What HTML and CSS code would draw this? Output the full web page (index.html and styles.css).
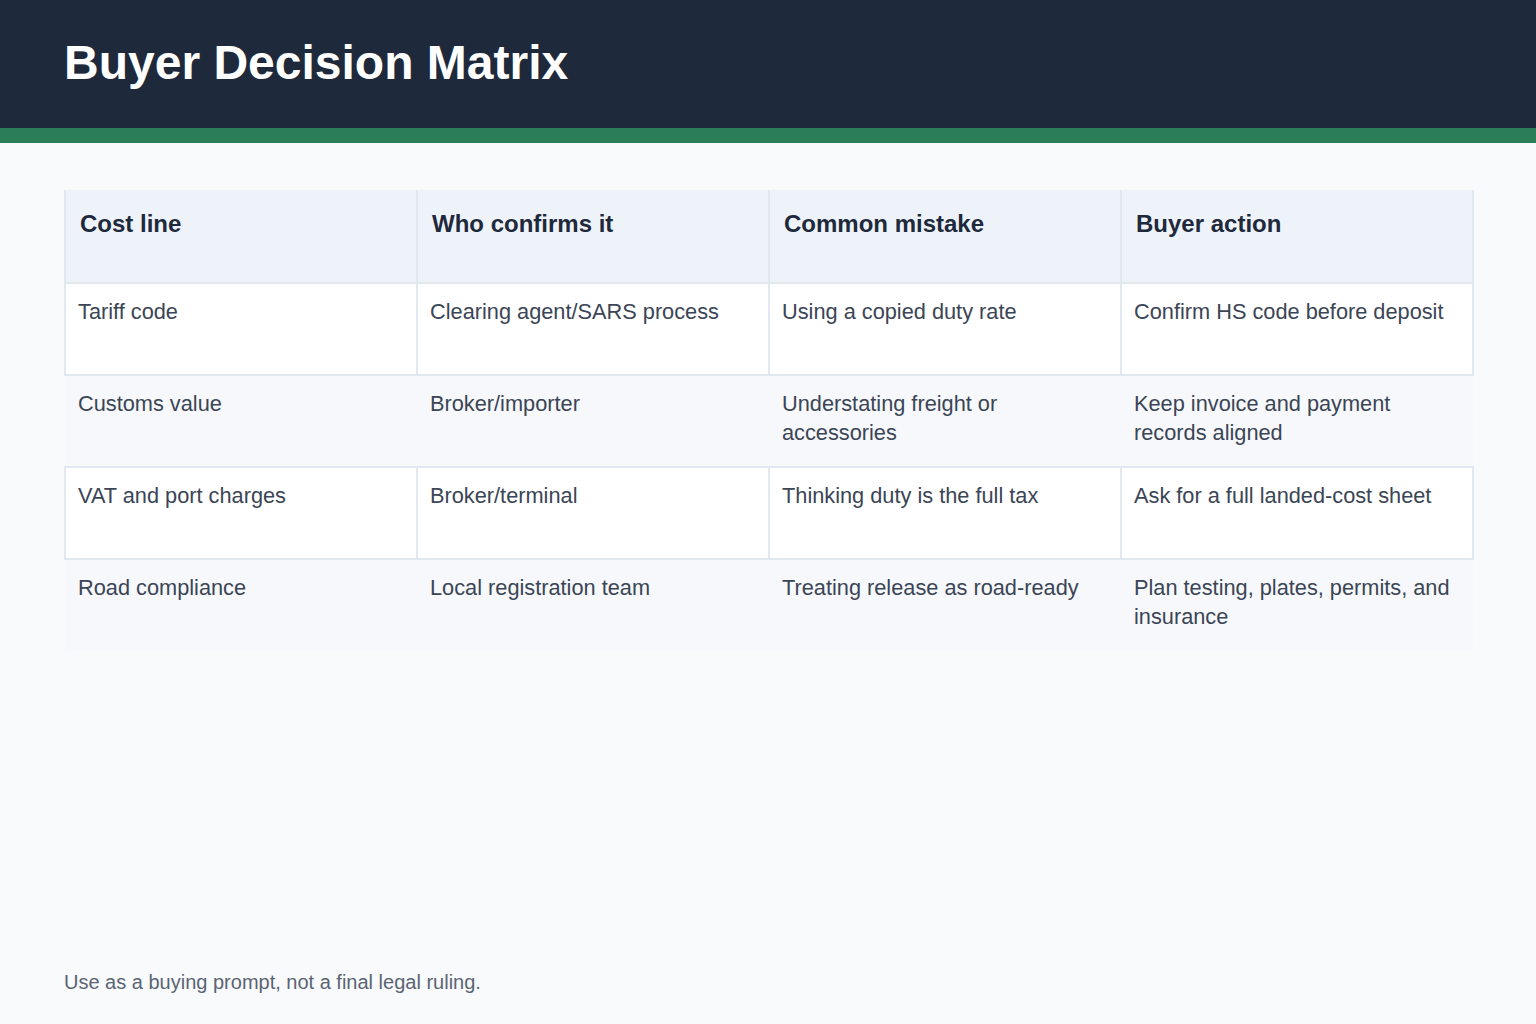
FILE: index.html
```html
<!DOCTYPE html>
<html lang="en">
<head>
<meta charset="utf-8">
<title>Buyer Decision Matrix</title>
<link rel="stylesheet" href="styles.css">
</head>
<body>
<div class="page">
  <header class="topbar">
    <h1 class="title">Buyer Decision Matrix</h1>
  </header>
  <main class="content">
    <table class="matrix">
      <thead>
        <tr>
          <th>Cost line</th>
          <th>Who confirms it</th>
          <th>Common mistake</th>
          <th>Buyer action</th>
        </tr>
      </thead>
      <tbody>
        <tr class="odd">
          <td>Tariff code</td>
          <td>Clearing agent/SARS process</td>
          <td>Using a copied duty rate</td>
          <td>Confirm HS code before deposit</td>
        </tr>
        <tr class="even">
          <td>Customs value</td>
          <td>Broker/importer</td>
          <td>Understating freight or accessories</td>
          <td>Keep invoice and payment records aligned</td>
        </tr>
        <tr class="odd">
          <td>VAT and port charges</td>
          <td>Broker/terminal</td>
          <td>Thinking duty is the full tax</td>
          <td>Ask for a full landed-cost sheet</td>
        </tr>
        <tr class="even">
          <td>Road compliance</td>
          <td>Local registration team</td>
          <td>Treating release as road-ready</td>
          <td>Plan testing, plates, permits, and insurance</td>
        </tr>
      </tbody>
    </table>
  </main>
  <footer class="note">Use as a buying prompt, not a final legal ruling.</footer>
</div>
</body>
</html>
```

FILE: styles.css
```css
* { box-sizing: border-box; }
html, body {
  margin: 0;
  padding: 0;
  background: #f8fafc;
  font-family: "Liberation Sans", Arial, sans-serif;
}
.page {
  min-height: 100vh;
  display: flex;
  flex-direction: column;
}
.topbar {
  background: #1e293b;
  height: 143px;
  border-bottom: 15px solid #2a7d57;
  padding: 0 64px;
  display: flex;
  align-items: center;
}
.title {
  margin: 0;
  color: #ffffff;
  font-size: 48px;
  font-weight: 700;
  line-height: 1;
  padding-bottom: 2px;
}
.content {
  flex: 1;
  padding: 47px 64px 0;
}
.matrix {
  width: 1410px;
  border-collapse: collapse;
  table-layout: fixed;
}
.matrix th {
  background: #eef3fa;
  color: #1e293b;
  font-size: 24px;
  font-weight: 700;
  text-align: left;
  vertical-align: top;
  height: 93px;
  padding: 17px 14px 0 14px;
  line-height: 33px;
  border-left: 2px solid #e2e8f0;
  border-right: 2px solid #e2e8f0;
  border-bottom: 2px solid #e2e8f0;
}
.matrix td {
  color: #3b4555;
  font-size: 21.75px;
  line-height: 29px;
  vertical-align: top;
  height: 92px;
  padding: 13px 12px 0 13px;
  text-align: left;
}
.matrix tr.odd td {
  background: #ffffff;
  border: 2px solid #e2e8f0;
  padding-left: 12px;
}
.matrix tr.even td {
  background: #f6f8fb;
  border: none;
}
.note {
  padding: 0 64px 30px;
  color: #5b6472;
  font-size: 20px;
  line-height: 24px;
}
```
